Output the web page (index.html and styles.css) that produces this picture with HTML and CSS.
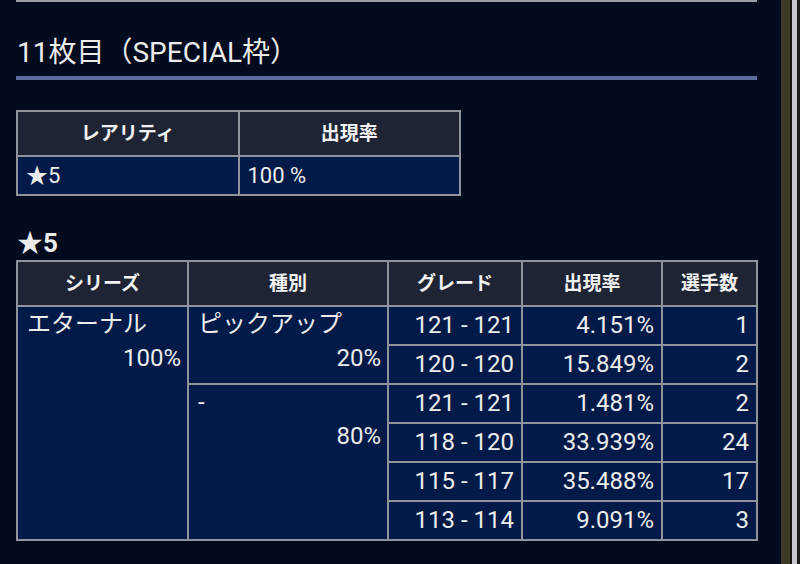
FILE: index.html
```html
<!DOCTYPE html>
<html lang="ja">
<head>
<meta charset="utf-8">
<title>11枚目（SPECIAL枠）</title>
<link rel="stylesheet" href="styles.css">
</head>
<body>
<div class="screen">
  <main class="content">
    <div class="prev-edge"></div>
    <h2 class="section-title">11枚目（SPECIAL枠）</h2>

    <table class="tbl rarity">
      <colgroup><col class="c-half"><col class="c-half"></colgroup>
      <thead>
        <tr><th>レアリティ</th><th>出現率</th></tr>
      </thead>
      <tbody>
        <tr><td>★5</td><td>100 %</td></tr>
      </tbody>
    </table>

    <h3 class="rank-title">★5</h3>

    <table class="tbl detail">
      <colgroup>
        <col class="c-series"><col class="c-kind"><col class="c-grade"><col class="c-rate"><col class="c-count">
      </colgroup>
      <thead>
        <tr><th>シリーズ</th><th>種別</th><th>グレード</th><th>出現率</th><th>選手数</th></tr>
      </thead>
      <tbody>
        <tr>
          <td class="group" rowspan="6"><div>エターナル</div><div class="pct">100%</div></td>
          <td class="group" rowspan="2"><div>ピックアップ</div><div class="pct">20%</div></td>
          <td class="num">121 - 121</td><td class="num">4.151%</td><td class="num">1</td>
        </tr>
        <tr><td class="num">120 - 120</td><td class="num">15.849%</td><td class="num">2</td></tr>
        <tr>
          <td class="group" rowspan="4"><div>-</div><div class="pct">80%</div></td>
          <td class="num">121 - 121</td><td class="num">1.481%</td><td class="num">2</td>
        </tr>
        <tr><td class="num">118 - 120</td><td class="num">33.939%</td><td class="num">24</td></tr>
        <tr><td class="num">115 - 117</td><td class="num">35.488%</td><td class="num">17</td></tr>
        <tr><td class="num">113 - 114</td><td class="num">9.091%</td><td class="num">3</td></tr>
      </tbody>
    </table>
  </main>
  <aside class="frame">
    <div class="frame-olive"></div>
    <div class="frame-gap"></div>
    <div class="frame-line"></div>
    <div class="frame-end"></div>
  </aside>
</div>
</body>
</html>
```
FILE: styles.css
```css
html, body {
  margin: 0;
  padding: 0;
  background: #020a1d;
}
body {
  font-family: Roboto, "Noto Sans CJK JP", sans-serif;
  color: #ececec;
}
.screen {
  display: flex;
  width: 800px;
  height: 564px;
  overflow: hidden;
}
.content {
  width: 781px;
  box-sizing: border-box;
  padding: 0 24px 0 16px;
  background: #020a1d;
}
.prev-edge {
  height: 2px;
  background: #9a9ea6;
}
.section-title {
  margin: 32px 0 0;
  padding: 0 0 5px 1px;
  font-size: 28px;
  font-weight: 400;
  line-height: 37px;
  border-bottom: 4px solid #5c6b9c;
}
.tbl {
  border-collapse: collapse;
  table-layout: fixed;
}
.tbl th, .tbl td {
  border: 2px solid #8e939c;
  padding: 0 7px;
}
.tbl th {
  background: #1e2434;
  font-size: 19px;
  font-weight: 700;
  text-align: center;
  color: #f2f2f2;
}
.tbl td {
  background: #011a48;
  font-size: 24px;
  font-weight: 400;
}
.rarity {
  margin-top: 30px;
  width: 445px;
}
.c-half { width: 50%; }
.rarity th { line-height: 43px; }
.rarity td { line-height: 37px; padding: 0 8px; font-size: 22px; }
.rank-title {
  margin: 30px 0 0;
  padding-left: 1px;
  font-size: 26px;
  font-weight: 700;
  line-height: 34px;
}
.detail {
  margin-top: 0;
  width: 740px;
}
.c-series { width: 171px; }
.c-kind { width: 200px; }
.c-grade { width: 134px; }
.c-rate { width: 140px; }
.c-count { width: 95px; }
.detail th { line-height: 43px; }
.detail td.num {
  line-height: 37px;
  text-align: right;
}
.detail td.group {
  vertical-align: top;
  line-height: 34px;
  padding: 0 6px 0 9px;
}
.detail .pct { text-align: right; }
.frame {
  display: flex;
  width: 19px;
}
.frame-olive { width: 9px; background: #3c3928; }
.frame-gap { width: 2px; background: #17170f; }
.frame-line { width: 5px; background: #c6cace; }
.frame-end { width: 3px; background: #1b1c1c; }
```
